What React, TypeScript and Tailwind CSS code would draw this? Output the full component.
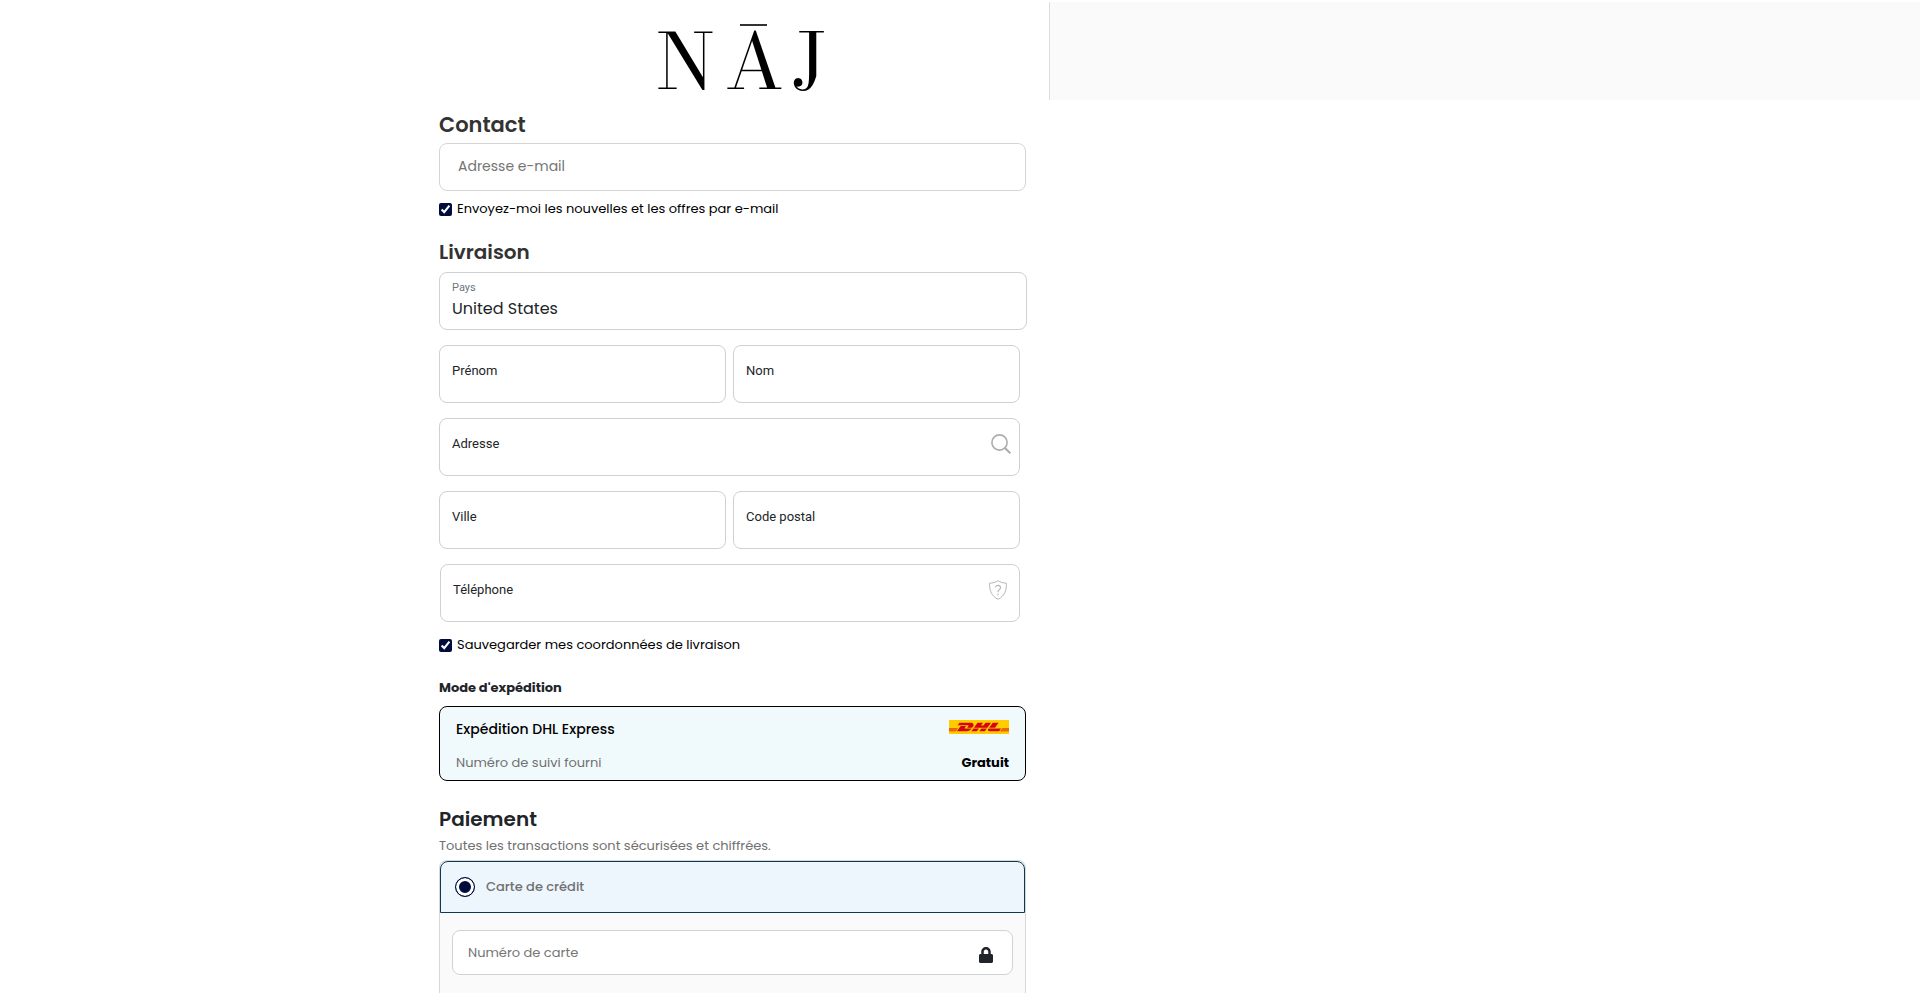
import { useId } from "react";
import type { ReactNode } from "react";
import { SiDhl } from "react-icons/si";
import { FaLock } from "react-icons/fa";

function Logo() {
  return (
    <svg viewBox="0 0 176 120" className="h-[120px] w-44 shrink-0 overflow-visible" role="img" aria-label="NĀJ">
      <g fontFamily="'Bodoni Moda', 'Playfair Display', 'Liberation Serif', serif" fontSize="76" fill="#000">
        <text x="5" y="89">N</text>
        <text x="74" y="89">A</text>
        <text x="141" y="89">J</text>
      </g>
      <rect x="89" y="24" width="27" height="2" fill="#333" />
    </svg>
  );
}

function SearchIcon() {
  return (
    <svg viewBox="0 0 20 20" className="size-5 shrink-0" fill="none" stroke="#adadad" aria-hidden="true">
      <circle cx="8.5" cy="8.5" r="7.6" strokeWidth="1.6" />
      <path d="M13.8 13.8 19.3 19.3" strokeWidth="2" />
    </svg>
  );
}

function ShieldIcon() {
  return (
    <svg viewBox="0 0 18 20" className="h-5 w-[18px] shrink-0" fill="none" stroke="#b5b5b5" aria-hidden="true">
      <path d="M9 .7C6.8 2.2 4 3 .6 3.2c-.3 6.500 1.500 12.600 8.400 16.100 6.900-3.500 8.700-9.600 8.400-16.100C14 3 11.200 2.200 9 .7Z" />
      <path d="M6.500 7.600C6.500 4.500 11.600 4.600 11.500 7.700 11.400 9.700 9 9.700 9 12.300M9 13.800v1.500" strokeWidth="1.200" />
    </svg>
  );
}

function Field({ label, children, className = "" }: { label: string; children?: ReactNode; className?: string }) {
  const id = useId();
  return (
    <div className={`flex h-[58px] min-w-0 flex-1 items-center gap-2 rounded-lg border border-[#cdd1d3] bg-white px-3 pb-[7px] ${className}`}>
      <label htmlFor={id} className="whitespace-nowrap font-[Roboto,sans-serif] text-[13px] text-[#212529]">
        {label}
      </label>
      <input id={id} className="h-8 w-0 min-w-0 flex-1 bg-transparent text-sm outline-none" />
      {children}
    </div>
  );
}

function Tick({ label }: { label: string }) {
  return (
    <label className="flex h-5 items-center gap-[5px] text-[13px] text-black">
      <input type="checkbox" defaultChecked className="size-[13px] accent-[#000c3c]" />
      {label}
    </label>
  );
}

export default function App() {
  return (
    <div className="grid min-h-screen grid-cols-[1049fr_871fr] items-stretch bg-white font-[Poppins,Inter,sans-serif] text-[#212529]">
      <main className="flex justify-end pr-[22px]">
        <form className="flex w-full max-w-[588px] flex-col">
          <header className="flex h-[100px] items-start justify-center pl-3">
            <Logo />
          </header>

          <h2 className="mt-2 flex h-[34px] items-center text-[21px] font-semibold text-[#333]">Contact</h2>
          <input
            type="email"
            aria-label="Adresse e-mail"
            placeholder="Adresse e-mail"
            className="mt-px mr-px h-12 rounded-lg border border-[#d5d5d5] px-[18px] pb-[2px] text-sm outline-none placeholder:text-[#757575]"
          />
          <div className="mt-2">
            <Tick label="Envoyez-moi les nouvelles et les offres par e-mail" />
          </div>

          <h2 className="mt-4 flex h-[34px] items-center text-xl font-semibold text-[#333]">Livraison</h2>
          <div className="mt-[3px] flex h-[58px] flex-col rounded-lg border border-[#cdd1d3] px-3 pt-2">
            <label htmlFor="country" className="font-[Roboto,sans-serif] text-[11px] leading-[14px] text-[#6c757d]">
              Pays
            </label>
            <select id="country" className="h-7 appearance-none bg-transparent text-base outline-none">
              <option>United States</option>
            </select>
          </div>

          <div className="mt-[15px] flex flex-col gap-[15px] pr-[7px]">
            <div className="flex gap-[7px]">
              <Field label="Prénom" />
              <Field label="Nom" />
            </div>
            <Field label="Adresse" className="flex-none pr-2">
              <SearchIcon />
            </Field>
            <div className="flex gap-[7px]">
              <Field label="Ville" />
              <Field label="Code postal" />
            </div>
            <Field label="Téléphone" className="ml-px flex-none">
              <ShieldIcon />
            </Field>
          </div>

          <div className="mt-[13px]">
            <Tick label="Sauvegarder mes coordonnées de livraison" />
          </div>

          <h3 className="mt-[23px] flex h-5 items-center text-[13px] font-bold">Mode d'expédition</h3>
          <div className="mt-2 mr-px flex h-[75px] flex-col justify-between rounded-lg border border-black bg-[#f0fafd] px-4 pt-3 pb-2 text-[13px]">
            <div className="flex items-center justify-between">
              <span className="text-sm font-medium text-black">Expédition DHL Express</span>
              <span className="mb-1 flex h-[14px] w-[60px] items-center justify-center overflow-hidden bg-[#ffcc00]">
                <SiDhl className="size-[60px] shrink-0 text-[#d40511]" title="DHL" />
              </span>
            </div>
            <div className="flex items-center justify-between">
              <span className="text-[#707070]">Numéro de suivi fourni</span>
              <span className="font-bold text-black">Gratuit</span>
            </div>
          </div>

          <h2 className="mt-[21px] flex h-[34px] items-center text-xl font-semibold">Paiement</h2>
          <p className="mb-1 flex h-5 items-center text-[13px] text-[#707070]">
            Toutes les transactions sont sécurisées et chiffrées.
          </p>
          <section className="mr-px flex flex-1 flex-col rounded-t-lg border border-b-0 border-[#d3dadd] bg-[#fafafa]">
            <label className="flex h-[52px] items-center gap-[11px] rounded-t-lg border border-[#12384f] bg-[#eef6fd] px-[14px] text-[13px] font-medium text-[#707070]">
              <input
                type="radio"
                name="payment"
                defaultChecked
                className="size-5 appearance-none rounded-full border border-[#000c3c] bg-[#000c3c] shadow-[inset_0_0_0_3px_#fff]"
              />
              Carte de crédit
            </label>
            <div className="px-3 pt-[17px]">
              <div className="flex h-[45px] items-center rounded-lg border border-[#d0d3d5] bg-white pr-[18px] pl-[15px]">
                <input
                  aria-label="Numéro de carte"
                  placeholder="Numéro de carte"
                  className="min-w-0 flex-1 bg-transparent text-[13px] outline-none placeholder:text-[#757575]"
                />
                <FaLock className="mt-1 size-4 text-[#212529]" />
              </div>
            </div>
          </section>
        </form>
      </main>
      <aside className="mt-0.5 h-[98px] border-l border-[#dedede] bg-[#fafafa]" />
    </div>
  );
}
